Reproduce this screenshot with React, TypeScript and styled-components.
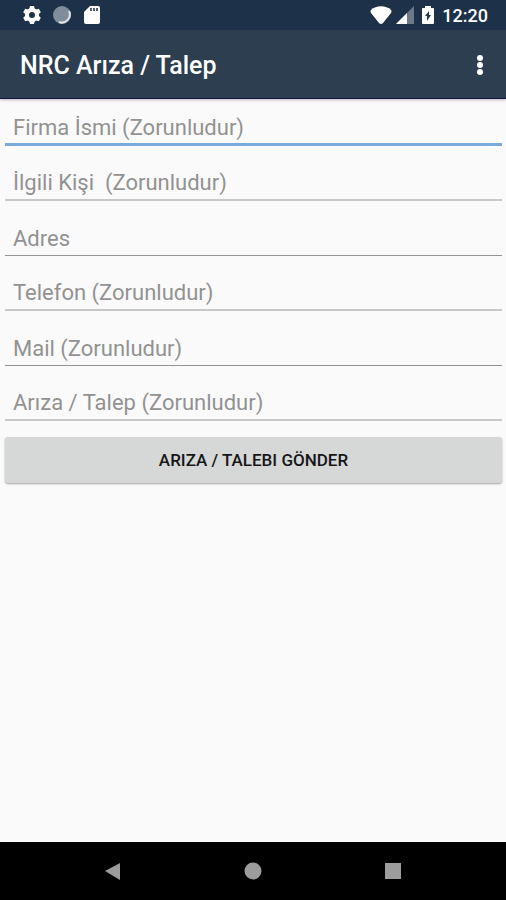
import React from "react";
import styled, { createGlobalStyle } from "styled-components";

const GlobalStyle = createGlobalStyle`
  * { box-sizing: border-box; }
  body { margin: 0; background: #fafafa; font-family: Roboto, "Noto Sans", sans-serif; }
`;

const Screen = styled.div`
  min-height: 100vh;
  display: flex;
  flex-direction: column;
  background: #fafafa;
`;

const StatusBar = styled.header`
  height: 30px;
  padding: 0 18px 0 22px;
  display: flex;
  align-items: center;
  justify-content: space-between;
  background: #1d3249;
  color: #fff;
`;

const StatusGroup = styled.div<{ $gap: number }>`
  display: flex;
  align-items: center;
  gap: ${(p) => p.$gap}px;
`;

const Clock = styled.time`
  padding-top: 2px;
  font-size: 18px;
  line-height: 28px;
  font-weight: 500;
`;

const AppBar = styled.div`
  height: 69px;
  padding: 4px 12px 0 20px;
  display: flex;
  align-items: center;
  justify-content: space-between;
  background: #2c3e50;
  border-bottom: 1px solid #14143f;
  box-shadow: 0 1px 3px rgba(60, 30, 60, 0.3);
  color: #fff;
`;

const Title = styled.h1`
  margin: 0;
  font-size: 25px;
  line-height: 32px;
  font-weight: 500;
`;

const IconButton = styled.button`
  display: flex;
  align-items: center;
  justify-content: center;
  padding: 0;
  border: 0;
  background: transparent;
  color: inherit;
`;

const Form = styled.form`
  flex: 1;
  padding: 0 4px 0 5px;
  display: flex;
  flex-direction: column;
`;

type Line = "active" | "soft" | "thin";

const lineStyles: Record<Line, string> = {
  active: "3px solid #78aadc",
  soft: "2px solid #c8c8c8",
  thin: "1px solid #949494",
};

const Field = styled.input<{ $line: Line }>`
  width: 100%;
  height: 47px;
  margin-bottom: 8px;
  padding: 14px 8px 2px;
  border: 0;
  border-bottom: ${(p) => lineStyles[p.$line]};
  border-radius: 0;
  outline: 0;
  background: transparent;
  color: #222;
  font: 400 22px/28px Roboto, "Noto Sans", sans-serif;
  &::placeholder { color: #929292; opacity: 1; }
`;

const Submit = styled.button`
  height: 46px;
  margin-top: 8px;
  border: 0;
  border-radius: 3px;
  background: #d6d7d7;
  box-shadow: 0 1px 2px rgba(0, 0, 0, 0.35);
  color: #161616;
  font: 500 17px/24px Roboto, "Noto Sans", sans-serif;
`;

const NavBar = styled.nav`
  height: 58px;
  display: grid;
  grid-template-columns: repeat(3, 140px);
  justify-content: center;
  background: #000;
  color: #9c9c9c;
`;

const fields: { label: string; line: Line }[] = [
  { label: "Firma İsmi (Zorunludur)", line: "active" },
  { label: "İlgili Kişi  (Zorunludur)", line: "soft" },
  { label: "Adres", line: "thin" },
  { label: "Telefon (Zorunludur)", line: "soft" },
  { label: "Mail (Zorunludur)", line: "thin" },
  { label: "Arıza / Talep (Zorunludur)", line: "soft" },
];

const teeth = [0, 60, 120, 180, 240, 300];

const GearIcon = () => (
  <svg width="20" height="20" viewBox="0 0 20 20" fill="currentColor">
    {teeth.map((angle) => (
      <path key={angle} d="M8 1h4l1 4H7z" transform={`rotate(${angle} 10 10)`} />
    ))}
    <circle cx="10" cy="10" r="5" fill="none" stroke="currentColor" strokeWidth="4" />
  </svg>
);

const SyncIcon = () => (
  <svg width="20" height="20" viewBox="0 0 20 20">
    <circle cx="10" cy="10" r="9" fill="#7f8c9b" />
    <path d="M17 6A8 8 0 0 1 7 17" fill="none" stroke="#dfe3e7" strokeWidth="2" />
  </svg>
);

const CardIcon = () => (
  <svg width="20" height="20" viewBox="0 0 20 20">
    <path d="M8 1h8q2 0 2 2v14q0 2-2 2H4q-2 0-2-2V7z" fill="currentColor" />
    <path d="M8 3h2v3H8zM11 3h2v3h-2zM14 3h2v3h-2z" fill="#53606e" />
  </svg>
);

const WifiIcon = () => (
  <svg width="22" height="18" viewBox="0 0 22 18" fill="currentColor">
    <path d="M1 4C6-1 16-1 21 4q1 1 0 3l-8 10q-2 2-4 0L1 7q-1-2 0-3z" />
  </svg>
);

const SignalIcon = () => (
  <svg width="18" height="18" viewBox="0 0 18 18" fill="currentColor">
    <path opacity=".35" d="M18 0v18H0z" />
    <path d="M11 7v11H0z" />
  </svg>
);

const BatteryIcon = () => (
  <svg width="20" height="20" viewBox="0 0 20 20">
    <path d="M7 1h6v2h2q1 0 1 1v14q0 1-1 1H5q-1 0-1-1V4q0-1 1-1h2z" fill="currentColor" />
    <path d="M11 6v4h2l-4 6v-5H7z" fill="#2b3a4a" />
  </svg>
);

export default function App() {
  return (
    <Screen>
      <GlobalStyle />
      <StatusBar>
        <StatusGroup $gap={10}>
          <GearIcon />
          <SyncIcon />
          <CardIcon />
        </StatusGroup>
        <StatusGroup $gap={4}>
          <WifiIcon />
          <SignalIcon />
          <BatteryIcon />
          <Clock>12:20</Clock>
        </StatusGroup>
      </StatusBar>
      <AppBar>
        <Title>NRC Arıza / Talep</Title>
        <IconButton type="button" aria-label="Menü">
          <svg width="28" height="28" viewBox="0 0 28 28" fill="currentColor">
            <circle cx="14" cy="6" r="3" />
            <circle cx="14" cy="13" r="3" />
            <circle cx="14" cy="20" r="3" />
          </svg>
        </IconButton>
      </AppBar>
      <Form>
        {fields.map(({ label, line }) => (
          <Field key={label} placeholder={label} aria-label={label} $line={line} />
        ))}
        <Submit type="button">ARIZA / TALEBI GÖNDER</Submit>
      </Form>
      <NavBar>
        <IconButton type="button" aria-label="Geri">
          <svg width="20" height="20" fill="currentColor"><path d="M17 2v17L2 10z" /></svg>
        </IconButton>
        <IconButton type="button" aria-label="Ana ekran">
          <svg width="20" height="20" fill="currentColor"><circle cx="10" cy="10" r="8.5" /></svg>
        </IconButton>
        <IconButton type="button" aria-label="Son uygulamalar">
          <svg width="20" height="20" fill="currentColor"><rect x="2" y="2" width="16" height="16" /></svg>
        </IconButton>
      </NavBar>
    </Screen>
  );
}
